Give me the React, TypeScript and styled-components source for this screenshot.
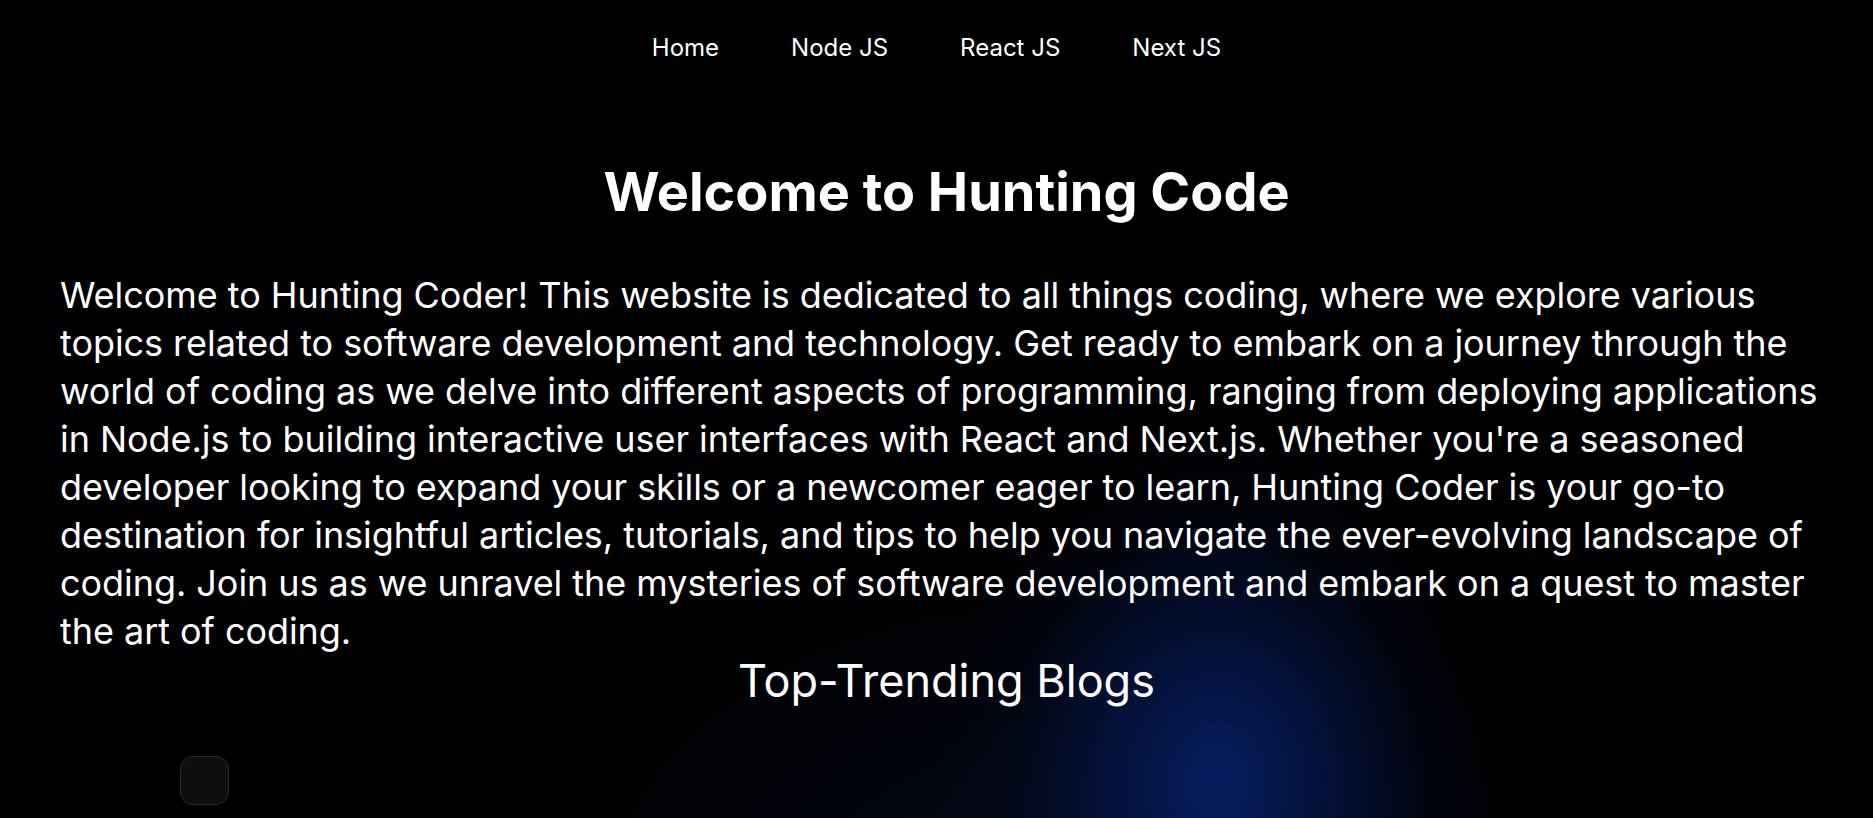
import React from "react";
import styled, { createGlobalStyle } from "styled-components";

const Global = createGlobalStyle`
  html, body { margin: 0; padding: 0; background: #000; }
  body { font-family: Inter, "Noto Sans", sans-serif; color: #fff; overflow: hidden; }
`;

const Page = styled.div`
  position: relative;
  min-height: 818px;
  background: #000;
  overflow: hidden;
`;

const Glow = styled.div`
  position: absolute;
  left: 450px;
  top: 300px;
  width: 1300px;
  height: 900px;
  background:
    radial-gradient(
      ellipse 280px 350px at 768px 480px,
      rgba(6, 30, 100, 0.95) 0%,
      rgba(4, 22, 72, 0.7) 40%,
      rgba(2, 10, 35, 0.3) 75%,
      rgba(0, 0, 0, 0) 100%
    ),
    radial-gradient(
      ellipse 540px 380px at 600px 620px,
      rgba(5, 10, 30, 0.95) 0%,
      rgba(3, 6, 18, 0.6) 55%,
      rgba(0, 0, 0, 0) 100%
    );
  pointer-events: none;
  z-index: 0;
`;

const Nav = styled.nav`
  position: relative;
  z-index: 1;
  display: flex;
  justify-content: center;
  gap: 72px;
  padding-top: 33px;
`;

const NavLink = styled.a`
  font-size: 24px;
  line-height: 30px;
  color: #fff;
  text-decoration: none;
`;

const Main = styled.main`
  position: relative;
  z-index: 1;
  padding: 0 40px 0 60px;
  display: flex;
  flex-direction: column;
  align-items: center;
`;

const Title = styled.h1`
  margin: 100px 0 0;
  font-size: 54px;
  line-height: 58px;
  font-weight: 700;
`;

const Intro = styled.p`
  margin: 50px 0 0;
  font-size: 36px;
  line-height: 48px;
  letter-spacing: -0.05px;
  align-self: stretch;
`;

const Subtitle = styled.h2`
  margin: 0;
  font-size: 45px;
  line-height: 52px;
  font-weight: 400;
`;

const Floating = styled.div`
  position: absolute;
  left: 180px;
  top: 756px;
  width: 47px;
  height: 47px;
  border-radius: 13px;
  background: #0e0e0e;
  border: 1px solid #2a2a2a;
  z-index: 2;
`;

export default function App() {
  return (
    <Page>
      <Global />
      <Glow />
      <Nav>
        <NavLink href="#">Home</NavLink>
        <NavLink href="#">Node JS</NavLink>
        <NavLink href="#">React JS</NavLink>
        <NavLink href="#">Next JS</NavLink>
      </Nav>
      <Main>
        <Title>Welcome to Hunting Code</Title>
        <Intro>
          Welcome to Hunting Coder! This website is dedicated to all things coding, where we explore various
          topics related to software development and technology. Get ready to embark on a journey through the
          world of coding as we delve into different aspects of programming, ranging from deploying applications
          in Node.js to building interactive user interfaces with React and Next.js. Whether you're a seasoned
          developer looking to expand your skills or a newcomer eager to learn, Hunting Coder is your go-to
          destination for insightful articles, tutorials, and tips to help you navigate the ever-evolving landscape of
          coding. Join us as we unravel the mysteries of software development and embark on a quest to master
          the art of coding.
        </Intro>
        <Subtitle>Top-Trending Blogs</Subtitle>
      </Main>
      <Floating />
    </Page>
  );
}
